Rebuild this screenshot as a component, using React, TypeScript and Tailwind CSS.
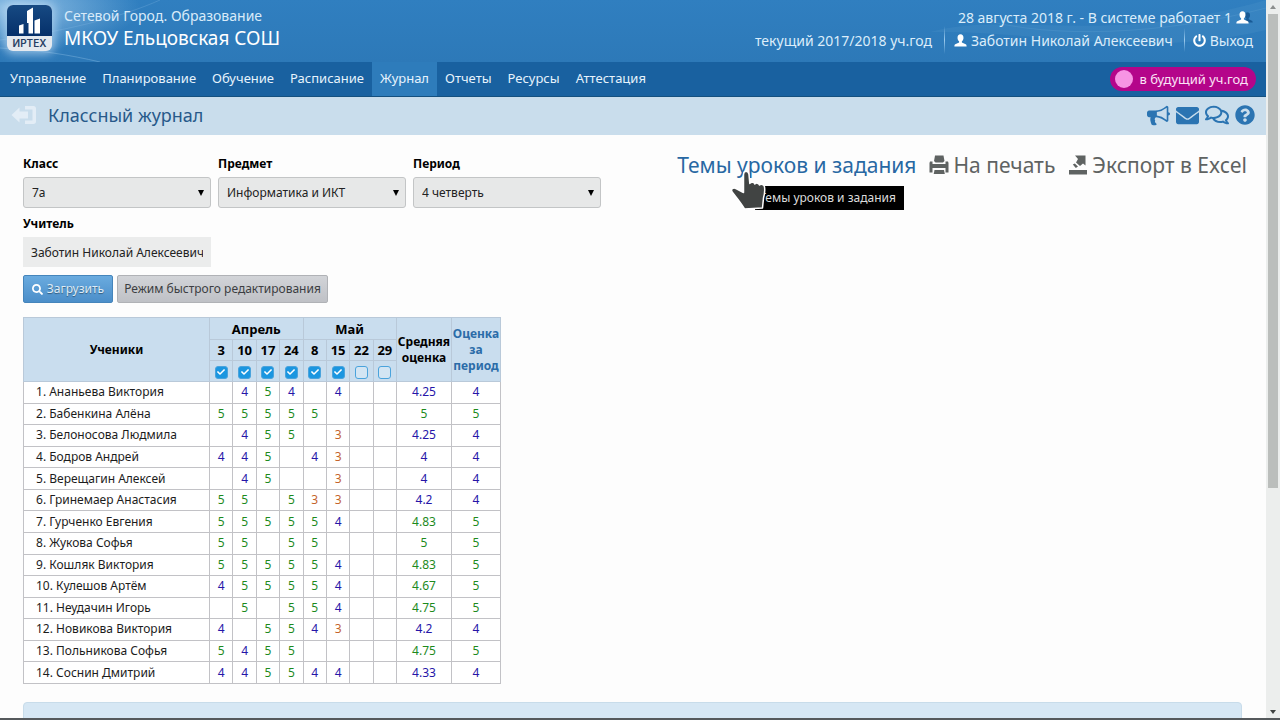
import { useState } from "react";
import type { ReactNode } from "react";
import {
  FaCheck,
  FaEnvelope,
  FaPowerOff,
  FaQuestionCircle,
  FaRegComments,
  FaSearch,
} from "react-icons/fa";

const NAV = [
  "Управление",
  "Планирование",
  "Обучение",
  "Расписание",
  "Журнал",
  "Отчеты",
  "Ресурсы",
  "Аттестация",
];

const DATES = ["3", "10", "17", "24", "8", "15", "22", "29"];

type Student = { name: string; marks: string; avg: string; total: string };

const STUDENTS: Student[] = [
  { name: "Ананьева Виктория", marks: "-454-4--", avg: "4.25", total: "4" },
  { name: "Бабенкина Алёна", marks: "55555---", avg: "5", total: "5" },
  { name: "Белоносова Людмила", marks: "-455-3--", avg: "4.25", total: "4" },
  { name: "Бодров Андрей", marks: "445-43--", avg: "4", total: "4" },
  { name: "Верещагин Алексей", marks: "-45--3--", avg: "4", total: "4" },
  { name: "Гринемаер Анастасия", marks: "55-533--", avg: "4.2", total: "4" },
  { name: "Гурченко Евгения", marks: "555554--", avg: "4.83", total: "5" },
  { name: "Жукова Софья", marks: "55-55---", avg: "5", total: "5" },
  { name: "Кошляк Виктория", marks: "555554--", avg: "4.83", total: "5" },
  { name: "Кулешов Артём", marks: "455554--", avg: "4.67", total: "5" },
  { name: "Неудачин Игорь", marks: "-5-554--", avg: "4.75", total: "5" },
  { name: "Новикова Виктория", marks: "4-5543--", avg: "4.2", total: "4" },
  { name: "Польникова Софья", marks: "5455----", avg: "4.75", total: "5" },
  { name: "Соснин Дмитрий", marks: "445544--", avg: "4.33", total: "4" },
];

function markColor(mark: string) {
  if (mark.startsWith("3")) return "text-[#c4642c]";
  return mark.startsWith("5") ? "text-[#1d8a1d]" : "text-[#2616a8]";
}

function averageColor(avg: string) {
  return Number(avg) >= 4.5 ? "text-[#1d8a1d]" : "text-[#2616a8]";
}

function UserIcon({ className }: { className?: string }) {
  return (
    <svg viewBox="0 0 14 14" className={className} fill="currentColor" aria-hidden="true">
      <path d="M7 0.4c-2.1 0-3.2 1.5-3.2 3.6 0 1.7.6 3.1 1.7 3.900v1.3L1.400 11C.7 11.400.4 12 .4 13.400h13.200c0-1.400-.3-2-1-2.400L8.500 9.200V7.900c1.100-.8 1.700-2.200 1.700-3.900C10.200 1.900 9.100.4 7 .4z" />
    </svg>
  );
}

function BullhornIcon() {
  return (
    <svg viewBox="0 0 1792 1792" className="h-[23px] w-[23px]" fill="currentColor" aria-hidden="true">
      <path d="M1664 640q53 0 90.5 37.5t37.5 90.5-37.5 90.5-90.5 37.5v384q0 52-38 90t-90 38q-417-347-812-380-58 19-91 66t-31 100.5 40 92.5q-20 33-23 65.5t6 58 33.5 55 48 50 61.5 50.5q-29 58-111.5 83t-168.5 11.5-132-55.5q-7-23-29.5-87.5t-32-94.5-23-89-15-101 3.5-98.5 22-110.5h-122q-66 0-113-47t-47-113v-192q0-66 47-113t113-47h480q435 0 896-384 52 0 90 38t38 90v384zm-128 604v-954q-394 302-768 343v270q377 42 768 341z" />
    </svg>
  );
}

function PrintIcon() {
  return (
    <svg viewBox="0 0 20 20" className="h-5 w-5" fill="currentColor" aria-hidden="true">
      <path d="M6 0.500h8.500L15.500 6l-1.500 1.500H6.500L5 6z" />
      <path d="M1 6.500h2.500v2.500h13V6.500H19l.5 1.500v9.500h-3V13h-13v4.500h-3V8z" />
      <path d="M5.500 15h9.500l.8 4H4.700z" />
    </svg>
  );
}

function ExportIcon() {
  return (
    <svg viewBox="0 0 20 20" className="h-5 w-5" fill="currentColor" aria-hidden="true">
      <path d="M7 0.500H17.500V10.500l-2.500-2-3 2.500-4-3.500L10 4z" />
      <path d="M4.800 9.500l2-1 3.200 3-2.200 1.500z" />
      <path d="M1 15h18v4.500H1z" />
    </svg>
  );
}

function ExitIcon() {
  return (
    <svg viewBox="0 0 26 20" className="h-5 w-[26px] text-[#e3edf6]" fill="currentColor" aria-hidden="true">
      <path d="M0.500 10l8-7.500v4h8.500v7H8.500v4z" />
      <path d="M14 1h8.500c1.500 0 2.500 1 2.500 2.500v13c0 1.500-1 2.500-2.500 2.500H14v-3.500h7.500v-11H14z" />
    </svg>
  );
}

function Logo() {
  return (
    <a
      href="#home"
      aria-label="ИРТЕХ"
      className="flex h-[46px] w-[45px] shrink-0 flex-col overflow-hidden rounded-md bg-[#e4e9ef] shadow-[0_0_10px_3px_rgba(190,220,245,0.7)]"
    >
      <span className="flex h-[31px] items-end justify-center bg-linear-to-b from-[#174a83] to-[#06306a]">
        <svg viewBox="0 0 45 31" className="h-[31px] w-[45px]" fill="white" aria-hidden="true">
          <path d="M12 20.500l4.500-1.500v9.500H12z" />
          <path d="M20 6l6-3.500v26h-4.500V18H20z" />
          <path d="M27.500 15.500l5.500-2v15h-5.500z" />
        </svg>
      </span>
      <span className="grow text-center font-[Inter,sans-serif] text-[10px] leading-[14px] font-semibold text-[#273f63]">
        ИРТЕХ
      </span>
    </a>
  );
}

function Field({
  id,
  label,
  children,
}: {
  id: string;
  label: string;
  children: ReactNode;
}) {
  return (
    <div className="w-[188px]">
      <label htmlFor={id} className="block text-[12px] leading-5 font-bold text-black">
        {label}
      </label>
      {children}
    </div>
  );
}

function SelectField({ id, label, options }: { id: string; label: string; options: string[] }) {
  return (
    <Field id={id} label={label}>
      <div className="mt-[3px] grid items-center">
        <select
          id={id}
          className="col-start-1 row-start-1 h-[31px] appearance-none rounded-[3px] border border-[#c3c5c6] bg-[#e7e8e8] pr-5 pl-2 text-[12px] text-[#222]"
        >
          {options.map((o) => (
            <option key={o}>{o}</option>
          ))}
        </select>
        <svg
          viewBox="0 0 6 6"
          className="pointer-events-none col-start-1 row-start-1 mr-[7px] h-[6px] w-[6px] justify-self-end"
          aria-hidden="true"
        >
          <path d="M0 0h6L3 6z" />
        </svg>
      </div>
    </Field>
  );
}

function Header() {
  return (
    <header className="relative flex h-[62px] justify-between overflow-hidden bg-linear-to-b from-[#307fc0] to-[#2d79b8] pr-[13px] pl-[7px]">
      <svg
        className="pointer-events-none absolute inset-0 h-full w-full"
        viewBox="0 0 1266 62"
        preserveAspectRatio="none"
        fill="none"
        aria-hidden="true"
      >
        <defs>
          <radialGradient id="glow">
            <stop offset="0" stopColor="#9cc8ea" stopOpacity="0.9" />
            <stop offset="1" stopColor="#9cc8ea" stopOpacity="0" />
          </radialGradient>
        </defs>
        <ellipse cx="10" cy="8" rx="130" ry="44" fill="url(#glow)" />
        <path d="M0 40C60 32 120 18 160 0" stroke="#8fc0e6" strokeOpacity="0.25" />
        <path d="M0 48C40 50 70 55 100 62" stroke="#8fc0e6" strokeOpacity="0.4" />
        <path d="M930 32C1010 10 1100 48 1266 0V30C1140 60 1040 30 930 32z" fill="#6aa9d8" fillOpacity="0.14" />
        <path d="M985 20C1050 38 1160 36 1266 8" stroke="#8fc0e6" strokeOpacity="0.15" />
      </svg>
      <div className="relative flex gap-3 pt-[5px]">
        <Logo />
        <div className="whitespace-nowrap">
          <p className="text-[14px] leading-[21px] text-[#d9ebf9]">Сетевой Город. Образование</p>
          <h1 className="text-[19px] leading-6 text-white">МКОУ Ельцовская СОШ</h1>
        </div>
      </div>
      <div className="relative flex flex-col items-end pt-[6px] text-[14px] whitespace-nowrap text-[#dcedfa]">
        <p className="flex h-[22px] items-center gap-1">
          28 августа 2018 г. - В системе работает 1
          <span className="flex items-center">
            <UserIcon className="relative h-[13px] w-[13px] text-white" />
            <UserIcon className="-ml-[7px] h-[13px] w-[11px] text-[#185a95]" />
          </span>
        </p>
        <div className="flex h-6 items-center">
          <span>текущий 2017/2018 уч.год</span>
          <span className="mr-[9px] ml-3 h-7 w-px bg-linear-to-b from-transparent via-[#9ccbee] to-transparent" />
          <a href="#profile" className="flex items-center gap-1">
            <UserIcon className="h-[13px] w-[13px] text-white" />
            Заботин Николай Алексеевич
          </a>
          <span className="mr-2 ml-[11px] h-6 w-px bg-linear-to-b from-transparent via-[#9ccbee] to-transparent" />
          <a href="#logout" className="flex items-center gap-1">
            <FaPowerOff className="h-[13px] w-[13px] text-white" />
            Выход
          </a>
        </div>
      </div>
    </header>
  );
}

function Nav() {
  return (
    <nav className="flex h-[35px] items-center justify-between border-b border-[#14507f] bg-[#1961a0] pr-[10px] pl-[2px]">
      <ul className="flex h-full text-[13px] whitespace-nowrap text-[#e6f3fd]">
        {NAV.map((item) => (
          <li key={item} className="flex">
            <a
              href="#nav"
              className={
                item === "Журнал" ? "flex items-center bg-[#2e7cbb] px-2" : "flex items-center px-2"
              }
            >
              {item}
            </a>
          </li>
        ))}
      </ul>
      <button
        type="button"
        className="flex h-6 items-center gap-[6px] rounded-full bg-[#b4058a] pr-2 pl-[5px] text-[13px] leading-5 whitespace-nowrap text-[#fbe3f6]"
      >
        <span className="h-[18px] w-[18px] rounded-full bg-[#f794e4]" />
        в будущий уч.год
      </button>
    </nav>
  );
}

function TitleBar() {
  return (
    <div className="flex h-[38px] items-center justify-between bg-[#c9ddec] pr-[11px] pb-[2px] pl-[11px]">
      <div className="flex items-center gap-[11px]">
        <a href="#back" aria-label="Назад">
          <ExitIcon />
        </a>
        <h2 className="text-[18px] leading-6 whitespace-nowrap text-[#27598a]">Классный журнал</h2>
      </div>
      <div className="flex items-center gap-[6px] text-[#2b74b2]">
        <a href="#news" aria-label="Объявления">
          <BullhornIcon />
        </a>
        <a href="#mail" aria-label="Почта">
          <FaEnvelope className="h-[23px] w-[23px]" />
        </a>
        <a href="#forum" aria-label="Форум">
          <FaRegComments className="h-[22px] w-[24px]" />
        </a>
        <a href="#help" aria-label="Помощь">
          <FaQuestionCircle className="h-5 w-5" />
        </a>
      </div>
    </div>
  );
}

function HandCursor() {
  return (
    <svg
      viewBox="0 0 36 42"
      className="absolute top-[18px] left-[54px] z-10 h-[42px] w-9"
      fill="#414443"
      stroke="#ffffff"
      strokeWidth="1.500"
      strokeLinejoin="round"
      aria-hidden="true"
    >
      <path d="M12.500 5.500c0-4.500 5-4.500 5.500 0l.8 9c1-1.800 4.500-1.500 5 .5 1.200-1.500 4.200-1 4.700 1 1.300-1.200 4.500-.7 5 1.800.5 3.200 0 7.700-1 11.200L31.500 39l-18 1C10 34 5 28 1.500 23.500c-2.500-3 .5-5.500 3.500-4l7.500 4z" />
    </svg>
  );
}

function Actions() {
  return (
    <div className="flex items-start gap-[13px] text-[21px] leading-7 whitespace-nowrap text-[#5f6362]">
      <div className="relative">
        <a href="#topics" className="text-[#2868a3]">
          Темы уроков и задания
        </a>
        <HandCursor />
        <div
          role="tooltip"
          className="absolute top-[35px] left-[78px] bg-black py-1 pr-2 pl-1 text-[12px] leading-4 text-[#dcdcdc]"
        >
          Темы уроков и задания
        </div>
      </div>
      <a href="#print" className="flex items-center gap-1">
        <PrintIcon />
        На печать
      </a>
      <a href="#export" className="flex items-center gap-1">
        <ExportIcon />
        Экспорт в Excel
      </a>
    </div>
  );
}

const CELL = "border border-[#c2c2c6] p-0 text-center";
const HEAD = "border border-[#b9c9d9] p-0 text-center font-bold";

function Journal() {
  const [checked, setChecked] = useState(DATES.map((_, i) => i < 6));
  return (
    <table className="mt-[14px] h-[367px] w-[478px] table-fixed border-collapse bg-white text-[12px] leading-4 text-[#1c1c1c]">
      <colgroup>
        <col className="w-[186px]" />
        {DATES.map((d) => (
          <col key={d} />
        ))}
        <col className="w-[55px]" />
        <col className="w-[49px]" />
      </colgroup>
      <thead className="bg-[#c9ddee] text-[13px] text-black">
        <tr className="h-[22px]">
          <th rowSpan={3} className={`${HEAD} text-[12px]`}>
            Ученики
          </th>
          <th colSpan={4} className={HEAD}>
            Апрель
          </th>
          <th colSpan={4} className={HEAD}>
            Май
          </th>
          <th rowSpan={3} className={`${HEAD} text-[12px]`}>
            Средняя оценка
          </th>
          <th rowSpan={3} className={`${HEAD} text-[12px]`}>
            <a href="#period" className="text-[#2b6ca8]">
              Оценка за период
            </a>
          </th>
        </tr>
        <tr className="h-[21px]">
          {DATES.map((d) => (
            <th key={d} className={HEAD}>
              {d}
            </th>
          ))}
        </tr>
        <tr className="h-[21px]">
          {DATES.map((d, i) => (
            <th key={d} className={HEAD}>
              <label className="inline-grid place-items-center align-middle">
                <input
                  type="checkbox"
                  aria-label={`Дата ${d}`}
                  checked={checked[i]}
                  onChange={() => setChecked(checked.map((c, j) => (j === i ? !c : c)))}
                  className="peer col-start-1 row-start-1 h-[13px] w-[13px] appearance-none rounded-[3px] border border-[#4aa3dc] bg-[#d3e5f3] checked:bg-[#1b96e0]"
                />
                <FaCheck className="pointer-events-none invisible col-start-1 row-start-1 h-2 w-2 text-white peer-checked:visible" />
              </label>
            </th>
          ))}
        </tr>
      </thead>
      <tbody>
        {STUDENTS.map((s, i) => (
          <tr key={s.name}>
            <td className="border border-[#c2c2c6] p-0 pl-3 whitespace-nowrap">
              {i + 1}. {s.name}
            </td>
            {s.marks.split("").map((m, j) => (
              <td key={j} className={`${CELL} ${markColor(m)}`}>
                {m === "-" ? "" : m}
              </td>
            ))}
            <td className={`${CELL} ${averageColor(s.avg)}`}>{s.avg}</td>
            <td className={`${CELL} ${markColor(s.total)}`}>{s.total}</td>
          </tr>
        ))}
      </tbody>
    </table>
  );
}

function Scrollbar() {
  return (
    <div className="flex w-[14px] shrink-0 flex-col items-center bg-[#eceeed]" aria-hidden="true">
      <svg viewBox="0 0 6 4" className="my-[5px] h-1 w-[6px] shrink-0" fill="#8b8e8d">
        <path d="M0 4L3 0l3 4z" />
      </svg>
      <div className="h-[66%] w-[10px] bg-[#bbbebc]" />
      <svg viewBox="0 0 6 4" className="mt-auto mb-1 h-1 w-[6px] shrink-0" fill="#3f4241">
        <path d="M0 0h6L3 4z" />
      </svg>
    </div>
  );
}

export default function App() {
  return (
    <div className="flex h-screen overflow-hidden border-b-2 border-[#55595c] bg-[#fdfdfd] font-['Noto_Sans','Open_Sans',sans-serif]">
      <div className="min-w-0 grow overflow-hidden">
        <Header />
        <Nav />
        <TitleBar />
        <main className="pr-[19px] pl-[23px]">
          <div className="flex items-start justify-between pt-[16px]">
            <form onSubmit={(e) => e.preventDefault()}>
              <div className="mt-[3px] flex gap-[7px]">
                <SelectField id="class" label="Класс" options={["7а"]} />
                <SelectField id="subject" label="Предмет" options={["Информатика и ИКТ"]} />
                <SelectField id="period" label="Период" options={["4 четверть"]} />
              </div>
              <div className="mt-[6px]">
                <Field id="teacher" label="Учитель">
                  <input
                    id="teacher"
                    readOnly
                    value="Заботин Николай Алексеевич"
                    className="mt-[3px] block h-[30px] w-full bg-[#ebecec] px-2 text-[12px] text-[#222]"
                  />
                </Field>
              </div>
              <div className="mt-2 flex gap-1 text-[12px] whitespace-nowrap">
                <button
                  type="submit"
                  className="flex h-7 w-[90px] items-center justify-center gap-1 rounded-[2px] border border-[#4585bb] bg-linear-to-b from-[#6aabdf] to-[#4b8ec9] text-[#dcebf7] text-shadow-[0_1px_1px_rgba(0,0,0,0.4)]"
                >
                  <FaSearch className="h-[11px] w-[11px] text-white" />
                  Загрузить
                </button>
                <button
                  type="button"
                  className="flex h-7 w-[211px] items-center justify-center rounded-[2px] border border-[#b0b2b6] bg-linear-to-b from-[#d2d4d8] to-[#bfc1c6] text-[#3c3e42]"
                >
                  Режим быстрого редактирования
                </button>
              </div>
            </form>
            <Actions />
          </div>
          <Journal />
          <section className="mt-[18px] mr-[5px] h-24 rounded-t-[4px] border border-[#c8dcea] bg-[#d6e7f4]" />
        </main>
      </div>
      <Scrollbar />
    </div>
  );
}
